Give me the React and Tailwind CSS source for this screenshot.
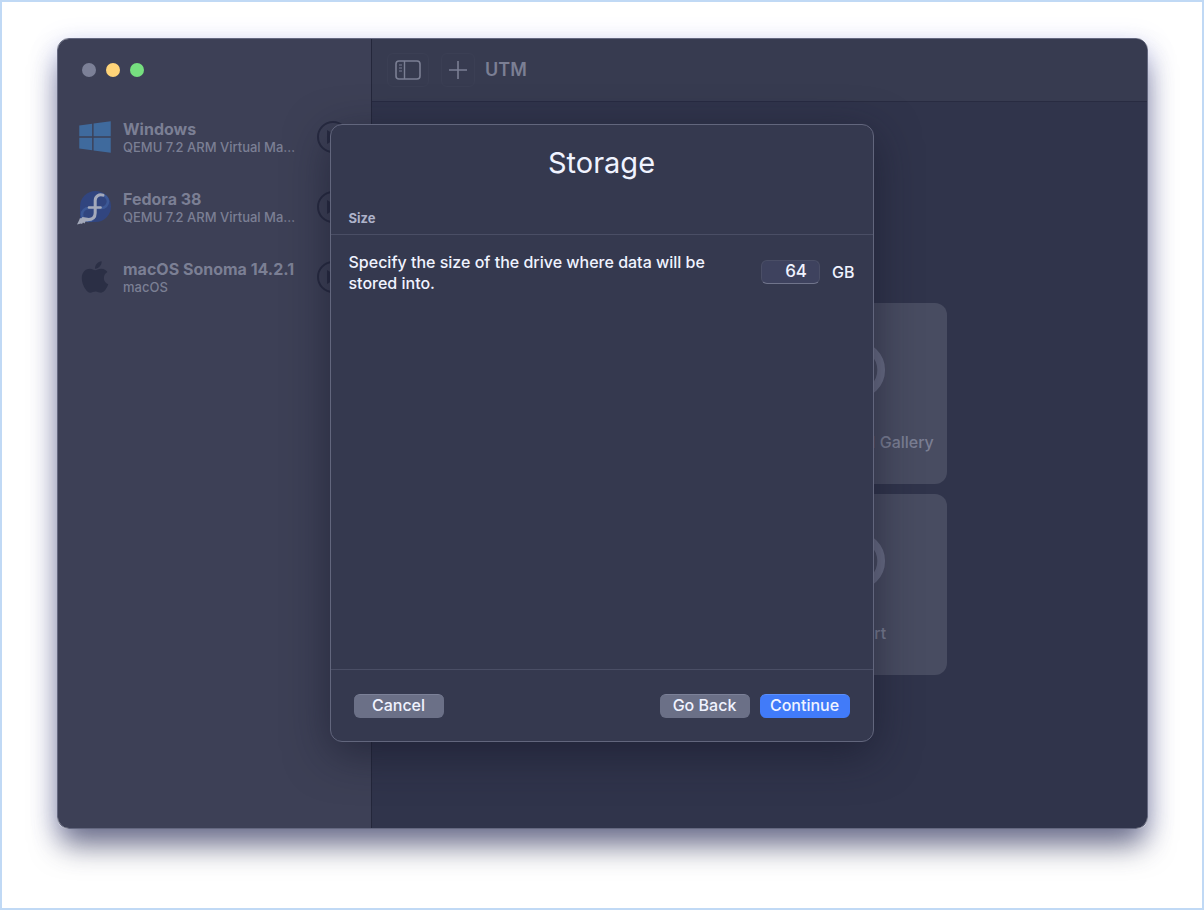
import React, { useState } from "react";
import { FaApple, FaWindows } from "react-icons/fa";

function FedoraLogo() {
  return (
    <svg viewBox="0 0 36 36" className="w-9 h-9" fill="none" aria-hidden="true">
      <path
        d="M18.500 2a15.500 15.500 0 1 1 0 31H6a3 3 0 0 1-3-3V17.500A15.500 15.500 0 0 1 18.500 2z"
        fill="#31457f"
      />
      <path
        d="M18 20v5.500a6.500 6.500 0 1 1-6.500-6.500h6.500"
        stroke="#3c5896"
        strokeWidth="2.600"
      />
      <path
        d="M18 18.500v-5.500a6.500 6.500 0 1 1 6.500 6h-6.500"
        stroke="#3c5896"
        strokeWidth="2.600"
      />
      <path
        d="M26 6.200c-4-1.400-7.800.8-7.800 5.300v12.500c0 4.500-3 6.700-8 6.700"
        stroke="#a4a9ba"
        strokeWidth="3"
        strokeLinecap="round"
      />
      <path d="M12 18.500h11.500" stroke="#a4a9ba" strokeWidth="2.600" strokeLinecap="round" />
      <path
        d="M12 29l-6.500-1-1.500 1.500-1-.5-1 2.500-2 4 4-1 1 .5 1-1.500 1.500 1 1-2 3.500-.5z"
        fill="#a4a9ba"
      />
    </svg>
  );
}

function SidebarIcon() {
  return (
    <svg viewBox="0 0 26 20" className="w-[26px] h-5" fill="none" stroke="currentColor" aria-hidden="true">
      <rect x="1" y="1" width="24" height="18" rx="3" strokeWidth="1.600" />
      <path d="M9.500 1v18" strokeWidth="1.400" />
      <path d="M4 5h3M4 8h3M4 11h3" strokeWidth="1.200" />
    </svg>
  );
}

const machines = [
  {
    name: "Windows",
    detail: "QEMU 7.2 ARM Virtual Ma…",
    icon: <FaWindows className="w-8 h-9 text-[#3f6a9d]" />,
  },
  {
    name: "Fedora 38",
    detail: "QEMU 7.2 ARM Virtual Ma…",
    icon: <FedoraLogo />,
  },
  {
    name: "macOS Sonoma 14.2.1",
    detail: "macOS",
    icon: <FaApple className="w-9 h-9 text-[#2b2f45]" />,
  },
];

const shortcuts = [
  { label: "Create a New VM", glyph: "M32 20v24M20 32h24" },
  { label: "Browse UTM Gallery", glyph: "M32 18v26M22 34l10 10 10-10" },
  { label: "User Guide", glyph: "M32 28v18M32 18v4" },
  { label: "Support", glyph: "M24 26c0-10 16-10 16 0 0 6-8 5-8 12M32 43v4" },
];

function Sidebar() {
  return (
    <aside className="w-[314px] shrink-0 bg-[#3d4056] border-r border-[#24273b]">
      <div className="flex gap-[10px] pl-6 pt-6">
        <button aria-label="Close" className="w-[14px] h-[14px] rounded-full bg-[#7c8097]" />
        <button aria-label="Minimize" className="w-[14px] h-[14px] rounded-full bg-[#ffd479]" />
        <button aria-label="Zoom" className="w-[14px] h-[14px] rounded-full bg-[#76df7f]" />
      </div>
      <ul className="pt-[25px] pl-[18px]">
        {machines.map((vm) => (
          <li key={vm.name} className="flex items-center h-[70px]">
            <div className="w-[38px] flex justify-center shrink-0">{vm.icon}</div>
            <div className="ml-[9px] w-[190px] whitespace-nowrap text-[#7b7f94]">
              <div className="text-[16px] leading-5 font-bold">{vm.name}</div>
              <div className="text-[13px] leading-4 font-medium">{vm.detail}</div>
            </div>
            <button
              aria-label={`Start ${vm.name}`}
              className="ml-1 w-8 h-8 shrink-0 rounded-full border-2 border-[#272a40] flex items-center justify-center"
            >
              <svg viewBox="0 0 12 14" className="w-3 h-[14px]" fill="#272a40" aria-hidden="true">
                <path d="M0 0l12 7-12 7z" />
              </svg>
            </button>
          </li>
        ))}
      </ul>
    </aside>
  );
}

function Main() {
  return (
    <main className="flex-1 flex flex-col bg-[#30344b] text-[#7b7f94]">
      <header className="h-[63px] flex items-center pl-[15px] bg-[#373b50] border-b border-[#282b41]">
        <button
          aria-label="Toggle sidebar"
          className="w-[42px] h-[34px] flex items-center justify-center rounded-md border border-[#3b3f54]"
        >
          <SidebarIcon />
        </button>
        <button
          aria-label="New virtual machine"
          className="ml-3 w-[34px] h-[34px] flex items-center justify-center rounded-md border border-[#3b3f54]"
        >
          <svg viewBox="0 0 18 18" className="w-[18px] h-[18px]" stroke="currentColor" strokeWidth="1.600" aria-hidden="true">
            <path d="M9 0v18M0 9h18" />
          </svg>
        </button>
        <h1 className="ml-[10px] text-[18px] leading-6 font-semibold">UTM</h1>
      </header>
      <div className="flex-1 flex items-center justify-center pt-12">
        <div className="grid grid-cols-2 gap-[10px]">
          {shortcuts.map((s) => (
            <button
              key={s.label}
              className="w-[182px] h-[181px] rounded-xl bg-[#484c61] flex flex-col items-center pt-9"
            >
              <svg viewBox="0 0 64 64" className="w-[62px] h-[62px]" fill="none" stroke="#6a6e86" strokeWidth="8" aria-hidden="true">
                <circle cx="32" cy="32" r="26" />
                <path d={s.glyph} />
              </svg>
              <span className="mt-[29px] text-[16px] leading-6 font-medium whitespace-nowrap">{s.label}</span>
            </button>
          ))}
        </div>
      </div>
    </main>
  );
}

function StorageDialog() {
  const [size, setSize] = useState("64");

  return (
    <div
      role="dialog"
      aria-labelledby="storage-title"
      className="w-[544px] h-[618px] flex flex-col rounded-xl border border-[#62667d] bg-[#35394f] text-[#f0f3ff] shadow-[0_12px_44px_rgba(20,22,40,0.55)]"
    >
      <div className="h-[110px] border-b border-[#4a4e65] px-[18px] flex flex-col justify-between">
        <h2 id="storage-title" className="pt-5 text-[29px] leading-9 text-center">
          Storage
        </h2>
        <h3 className="pb-2 text-[13px] leading-4 font-bold text-[#aeb2c9]">Size</h3>
      </div>
      <div className="flex-1 flex items-start px-[18px] pt-[17px] text-[16px] font-medium">
        <label htmlFor="drive-size" className="flex-1 pr-8 leading-[21px]">
          Specify the size of the drive where data will be stored into.
        </label>
        <div className="flex items-center mt-2">
          <input
            id="drive-size"
            type="text"
            value={size}
            onChange={(e) => setSize(e.target.value)}
            className="w-[59px] h-6 pr-3 rounded-md border border-[#4a4e66] border-b-[#70748b] bg-[#3e425e] text-right text-[17px]"
          />
          <span className="ml-3 leading-6">GB</span>
        </div>
      </div>
      <div className="h-[72px] border-t border-[#4a4e65] px-[23px] pt-6 flex items-start text-[16px] leading-5 font-medium">
        <button className="w-[90px] h-6 pb-1 rounded-md bg-[#6b7087] border-t border-[#7c8198]">Cancel</button>
        <button className="ml-auto w-[90px] h-6 pb-1 rounded-md bg-[#6b7087] border-t border-[#7c8198]">
          Go Back
        </button>
        <button className="ml-[10px] w-[90px] h-6 pb-1 rounded-md bg-[#417bf9] border-t border-[#5b8ffb]">
          Continue
        </button>
      </div>
    </div>
  );
}

export default function App() {
  return (
    <div className="min-h-screen flex border-2 border-[#c0d9f5] bg-white pl-[55px] pr-[54px] pt-9 pb-[79px] font-['Inter',sans-serif]">
      <div className="relative flex-1 flex rounded-xl shadow-[0_20px_30px_-4px_rgba(45,48,75,0.65),0_6px_26px_rgba(120,130,240,0.32)]">
        <div className="flex-1 flex overflow-hidden rounded-xl border border-[#646880]">
          <Sidebar />
          <Main />
        </div>
        <div className="absolute inset-0 flex items-start justify-center pt-[86px] pr-0.5">
          <StorageDialog />
        </div>
      </div>
    </div>
  );
}
